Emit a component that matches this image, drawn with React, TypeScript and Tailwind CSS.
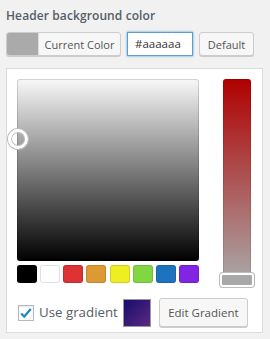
const swatches = ["#000000", "#ffffff", "#dd3333", "#dd9933", "#eeee22", "#81d742", "#1e73be", "#8224e3"];

export default function App() {
  return (
    <div className="h-[339px] w-[270px] bg-[#f1f1f1] pl-[6px] pt-[4px] font-['Open_Sans',sans-serif] text-[#555]">
      <h2 className="h-[24px] text-[12px] font-semibold leading-[24px] tracking-[0.1px] text-[#555d66]">Header background color</h2>
      <div className="mt-[4px] flex h-[24px] items-stretch">
        <button className="flex w-[115px] overflow-hidden rounded-[3px] border border-[#cccccc] bg-[#f7f7f7] shadow-[0_1px_0_#cccccc]">
          <span className="w-[31px] bg-[#aaaaaa]" />
          <span className="flex flex-1 items-center justify-center border-l border-[#dddddd] text-[11px] leading-none">Current Color</span>
        </button>
        <div className="ml-[6px] flex w-[66px] items-center border border-[#5b9dd9] bg-white pl-[7px] text-[11.5px] text-[#333] shadow-[0_0_2px_rgba(30,140,190,0.8)]">
          #aaaaaa
        </div>
        <button className="ml-[6px] w-[55px] rounded-[3px] border border-[#cccccc] bg-[#f7f7f7] text-[11px] leading-none shadow-[0_1px_0_#cccccc]">
          Default
        </button>
      </div>
      <div className="mt-[12px] h-[265px] w-[257px] border border-[#dcdcdc] bg-white pl-[10px] pt-[10px]">
        <div className="flex">
          <div className="flex w-[182px] flex-col">
            <div className="relative h-[182px] rounded-[3px] bg-[linear-gradient(to_bottom,#f8f8f8,#000000)] shadow-[inset_0_0_0_1px_rgba(0,0,0,0.15)]">
              <span className="absolute left-[-9px] top-[50px] h-[20px] w-[20px] rounded-full border-[3px] border-white shadow-[0_0_0_1px_#bbbbbb,inset_0_0_0_1px_#bbbbbb]" />
            </div>
            <div className="mt-[4px] flex justify-between">
              {swatches.map((c) => (
                <span
                  key={c}
                  className="h-[18px] w-[20px] rounded-[3px] shadow-[inset_0_0_0_1px_rgba(0,0,0,0.12)]"
                  style={{ backgroundColor: c }}
                />
              ))}
            </div>
          </div>
          <div className="relative ml-[24px] h-[208px] w-[28px]">
            <div className="h-[204px] rounded-[3px] bg-[linear-gradient(to_bottom,#b00000,#aaaaaa)] shadow-[inset_0_0_0_1px_rgba(0,0,0,0.1)]" />
            <span className="absolute bottom-0 left-[-3px] h-[14px] w-[34px] rounded-[3px] border-[2px] border-white bg-[#a8a8a8] shadow-[0_0_0_1px_#bbbbbb]" />
          </div>
        </div>
        <div className="mt-[11px] flex h-[29px] items-center">
          <span className="ml-[1px] flex h-[16px] w-[16px] items-center justify-center border border-[#b4b9be] bg-white shadow-[inset_0_1px_2px_rgba(0,0,0,0.1)]">
            <svg viewBox="0 0 16 16" className="h-[14px] w-[14px]">
              <path d="M2.5 8.5 L6 12 L13.5 3.5" fill="none" stroke="#1e8cbe" strokeWidth="2.6" />
            </svg>
          </span>
          <span className="ml-[5px] text-[13.3px] leading-none text-[#555d66]">Use gradient</span>
          <span className="ml-[5px] h-[28px] w-[28px] border border-[#999] bg-[linear-gradient(135deg,#180c6e,#5a2a80)]" />
          <button className="ml-[8px] h-[29px] w-[89px] rounded-[3px] border border-[#cccccc] bg-[#f7f7f7] text-[11.5px] leading-none shadow-[0_1px_0_#cccccc]">
            Edit Gradient
          </button>
        </div>
      </div>
    </div>
  );
}
